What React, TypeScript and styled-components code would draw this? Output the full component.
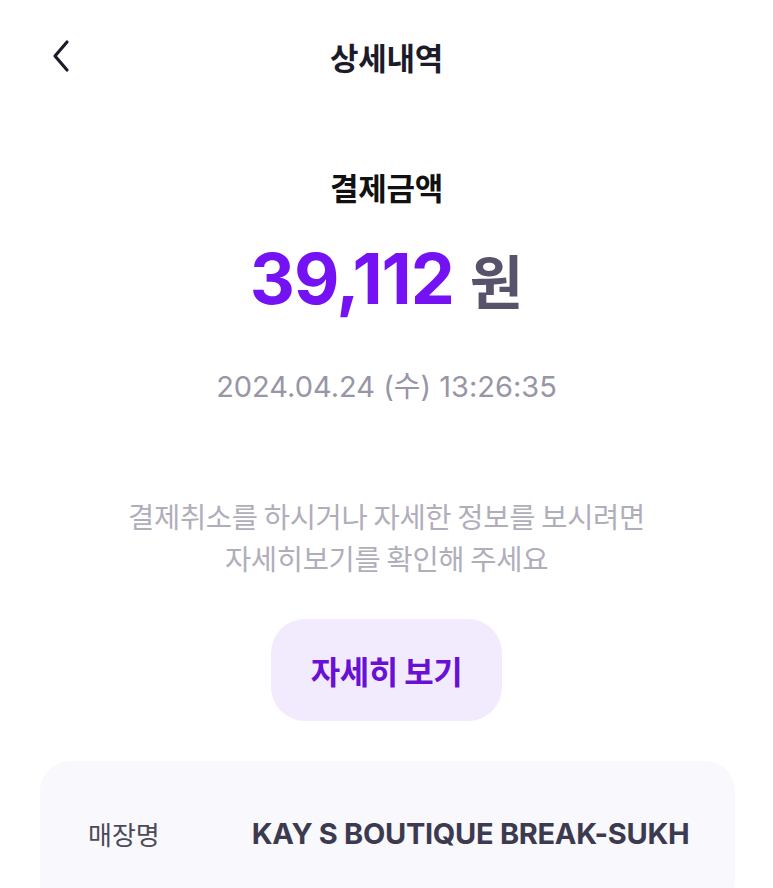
import styled, { createGlobalStyle } from 'styled-components';

const GlobalStyle = createGlobalStyle`
  html, body {
    margin: 0;
    padding: 0;
    background: #ffffff;
  }
  body {
    font-family: Inter, "Noto Sans CJK KR", sans-serif;
    -webkit-font-smoothing: antialiased;
  }
`;

interface infoType {
  label: string;
  value: string;
}

const infoList: infoType[] = [{ label: '매장명', value: 'KAY S BOUTIQUE BREAK-SUKH' }];

const App = () => {
  return (
    <Page>
      <GlobalStyle />
      <Header>
        <BackButton aria-label="뒤로">
          <svg width="22" height="34" viewBox="0 0 22 34" fill="none">
            <polyline
              points="17 3 5 17 17 31"
              stroke="#1c1b2b"
              strokeWidth="3.2"
              strokeLinecap="round"
              strokeLinejoin="round"
            />
          </svg>
        </BackButton>
        <Title>상세내역</Title>
      </Header>
      <Summary>
        <Caption>결제금액</Caption>
        <Amount>
          <Number>39,112</Number>
          <Unit>원</Unit>
        </Amount>
        <DateText>2024.04.24 (수) 13:26:35</DateText>
        <Notice>
          결제취소를 하시거나 자세한 정보를 보시려면
          <br />
          자세히보기를 확인해 주세요
        </Notice>
        <DetailButton>자세히 보기</DetailButton>
      </Summary>
      <InfoCard>
        {infoList.map((info, index) => (
          <InfoRow key={index}>
            <Label>{info.label}</Label>
            <Value>{info.value}</Value>
          </InfoRow>
        ))}
      </InfoCard>
    </Page>
  );
};

const Page = styled.div`
  width: 773px;
  height: 888px;
  background: #ffffff;
  overflow: hidden;
`;

const Header = styled.header`
  position: relative;
  height: 112px;
  display: flex;
  align-items: center;
  justify-content: center;
`;

const BackButton = styled.button`
  position: absolute;
  left: 50px;
  top: 39px;
  padding: 0;
  border: none;
  background: none;
  display: flex;
`;

const Title = styled.h1`
  margin: 0;
  font-family: "Noto Sans CJK KR", sans-serif;
  font-size: 31px;
  font-weight: 700;
  color: #1c1b2b;
  letter-spacing: -0.3px;
`;

const Summary = styled.section`
  display: flex;
  flex-direction: column;
  align-items: center;
  padding-top: 55px;
`;

const Caption = styled.div`
  font-family: "Noto Sans CJK KR", sans-serif;
  font-size: 31px;
  font-weight: 700;
  color: #111111;
  line-height: 40px;
  letter-spacing: -0.3px;
`;

const Amount = styled.div`
  margin-top: 32px;
  display: flex;
  align-items: baseline;
  gap: 16px;
  line-height: 80px;
`;

const Number = styled.span`
  font-family: Inter, sans-serif;
  font-size: 70px;
  font-weight: 700;
  color: #7412f4;
  letter-spacing: -1px;
`;

const Unit = styled.span`
  font-family: "Noto Sans CJK KR", sans-serif;
  font-size: 58px;
  font-weight: 700;
  color: #58536a;
`;

const DateText = styled.div`
  margin-top: 48px;
  font-family: Inter, "Noto Sans CJK KR", sans-serif;
  font-size: 29px;
  color: #9896a6;
  line-height: 40px;
`;

const Notice = styled.p`
  margin: 88px 0 0;
  text-align: center;
  font-family: "Noto Sans CJK KR", sans-serif;
  font-size: 28.5px;
  line-height: 42px;
  color: #b0aebb;
  letter-spacing: -0.3px;
`;

const DetailButton = styled.button`
  margin-top: 40px;
  width: 231px;
  height: 102px;
  border: none;
  border-radius: 34px;
  background: #f1ebfd;
  font-family: "Noto Sans CJK KR", sans-serif;
  font-size: 32px;
  font-weight: 700;
  color: #6a0fd4;
  letter-spacing: -0.5px;
`;

const InfoCard = styled.section`
  margin: 40px 38px 0 40px;
  background: #f9f8fd;
  border-radius: 30px;
  padding: 54px 24px 60px 48px;
`;

const InfoRow = styled.div`
  display: flex;
  align-items: center;
  gap: 92px;
  white-space: nowrap;
`;

const Label = styled.span`
  flex-shrink: 0;
  font-family: "Noto Sans CJK KR", sans-serif;
  font-size: 26px;
  color: #4c4a58;
`;

const Value = styled.span`
  font-family: Inter, sans-serif;
  font-size: 29px;
  font-weight: 700;
  color: #3c3a4e;
  letter-spacing: -0.3px;
`;

export default App;
